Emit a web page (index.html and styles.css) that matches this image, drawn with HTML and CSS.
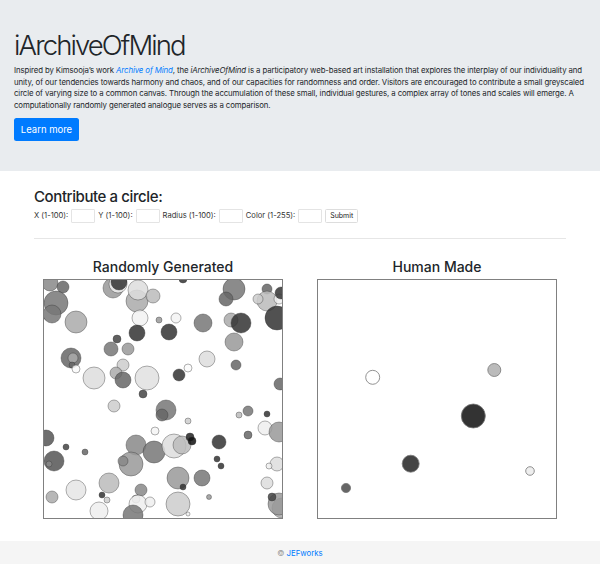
FILE: index.html
```html
<!DOCTYPE html>
<html>
<head>
<meta charset="utf-8">
<link rel="stylesheet" href="styles.css">
</head>
<body>
<div class="jumbotron">
  <h1 class="title">iArchiveOfMind</h1>
  <p class="lead">Inspired by Kimsooja’s work <a href="#" class="link ital">Archive of Mind</a>, the <span class="ital">iArchiveOfMind</span> is a participatory web-based art installation that explores the interplay of our individuality and unity, of our tendencies towards harmony and chaos, and of our capacities for randomness and order. Visitors are encouraged to contribute a small greyscaled circle of varying size to a common canvas. Through the accumulation of these small, individual gestures, a complex array of tones and scales will emerge. A computationally randomly generated analogue serves as a comparison.</p>
  <a href="#" class="btn">Learn more</a>
</div>
<div class="container">
  <h2 class="contrib">Contribute a circle:</h2>
  <form class="form-row">
    <label>X (1-100):</label><input type="text" class="num">
    <label>Y (1-100):</label><input type="text" class="num">
    <label>Radius (1-100):</label><input type="text" class="num">
    <label>Color (1-255):</label><input type="text" class="num">
    <button type="button" class="submit">Submit</button>
  </form>
  <hr class="rule">
  <div class="canvases">
    <div class="col">
      <h3 class="col-title">Randomly Generated</h3>
      <div class="canvas">
        <svg class="art random" width="238" height="238" viewBox="44 280 238 238">
          <circle cx="50" cy="283" r="8" fill="#888"/>
          <circle cx="63" cy="287" r="6" fill="#666"/>
          <circle cx="56" cy="303" r="12" fill="#777"/>
          <circle cx="52" cy="314" r="9" fill="#777"/>
          <circle cx="76" cy="322" r="11" fill="#aaa"/>
          <circle cx="113" cy="288" r="10" fill="#999"/>
          <circle cx="118" cy="284" r="9" fill="#eee"/>
          <circle cx="119" cy="282" r="8" fill="#333"/>
          <circle cx="137" cy="301" r="11" fill="#aaa"/>
          <circle cx="138" cy="290" r="10" fill="#ddd"/>
          <circle cx="153" cy="296" r="7" fill="#bbb"/>
          <circle cx="140" cy="318" r="8" fill="#f2f2f2"/>
          <circle cx="159" cy="320" r="3" fill="#999"/>
          <circle cx="137" cy="333" r="8" fill="#333"/>
          <circle cx="169" cy="332" r="8" fill="#333"/>
          <circle cx="117" cy="339" r="4" fill="#444"/>
          <circle cx="111" cy="349" r="7" fill="#777"/>
          <circle cx="128" cy="349" r="6" fill="#999"/>
          <circle cx="71" cy="358" r="10" fill="#666"/>
          <circle cx="73" cy="358" r="5" fill="#aaa"/>
          <circle cx="72" cy="365" r="3" fill="#666"/>
          <circle cx="76" cy="369" r="4" fill="#fafafa"/>
          <circle cx="94" cy="378" r="11" fill="#ddd"/>
          <circle cx="123" cy="365" r="6" fill="#ccc"/>
          <circle cx="116" cy="373" r="6" fill="#aaa"/>
          <circle cx="123" cy="380" r="8" fill="#666"/>
          <circle cx="147" cy="378" r="12" fill="#e0e0e0"/>
          <circle cx="143" cy="394" r="4" fill="#444"/>
          <circle cx="183" cy="279" r="4" fill="#333"/>
          <circle cx="234" cy="289" r="11" fill="#777"/>
          <circle cx="226" cy="299" r="7" fill="#666"/>
          <circle cx="267" cy="289" r="5" fill="#666"/>
          <circle cx="267" cy="301" r="10" fill="#bbb"/>
          <circle cx="258" cy="299" r="5" fill="#ccc"/>
          <circle cx="279" cy="299" r="5" fill="#eee"/>
          <circle cx="281" cy="293" r="6" fill="#333"/>
          <circle cx="277" cy="318" r="12" fill="#333"/>
          <circle cx="176" cy="318" r="5" fill="#f3f3f3"/>
          <circle cx="203" cy="323" r="9" fill="#777"/>
          <circle cx="231" cy="320" r="7" fill="#aaa"/>
          <circle cx="241" cy="323" r="10" fill="#333"/>
          <circle cx="234" cy="342" r="9" fill="#999"/>
          <circle cx="207" cy="359" r="8" fill="#ddd"/>
          <circle cx="236" cy="365" r="5" fill="#666"/>
          <circle cx="188" cy="368" r="4" fill="#fafafa"/>
          <circle cx="179" cy="375" r="6" fill="#333"/>
          <circle cx="280" cy="384" r="6" fill="#666"/>
          <circle cx="114" cy="406" r="6" fill="#ccc"/>
          <circle cx="166" cy="410" r="10" fill="#777"/>
          <circle cx="162" cy="415" r="6" fill="#666"/>
          <circle cx="155" cy="431" r="4" fill="#f5f5f5"/>
          <circle cx="46" cy="438" r="8" fill="#555"/>
          <circle cx="66" cy="447" r="3" fill="#444"/>
          <circle cx="85" cy="452" r="3" fill="#666"/>
          <circle cx="54" cy="461" r="10" fill="#555"/>
          <circle cx="49" cy="464" r="3" fill="#888"/>
          <circle cx="136" cy="445" r="10" fill="#888"/>
          <circle cx="154" cy="452" r="11" fill="#777"/>
          <circle cx="131" cy="464" r="12" fill="#999"/>
          <circle cx="123" cy="461" r="5" fill="#888"/>
          <circle cx="109" cy="483" r="10" fill="#bbb"/>
          <circle cx="76" cy="490" r="10" fill="#e5e5e5"/>
          <circle cx="52" cy="497" r="6" fill="#aaa"/>
          <circle cx="102" cy="495" r="3" fill="#333"/>
          <circle cx="107" cy="500" r="3" fill="#ccc"/>
          <circle cx="141" cy="490" r="6" fill="#888"/>
          <circle cx="136" cy="499" r="4" fill="#ccc"/>
          <circle cx="138" cy="504" r="9" fill="#eee"/>
          <circle cx="150" cy="502" r="5" fill="#eee"/>
          <circle cx="99" cy="511" r="9" fill="#eee"/>
          <circle cx="133" cy="515" r="10" fill="#777"/>
          <circle cx="188" cy="421" r="3" fill="#ccc"/>
          <circle cx="248" cy="411" r="5" fill="#777"/>
          <circle cx="239" cy="415" r="3" fill="#bbb"/>
          <circle cx="267" cy="414" r="3" fill="#333"/>
          <circle cx="265" cy="428" r="7" fill="#eee"/>
          <circle cx="279" cy="432" r="10" fill="#999"/>
          <circle cx="248" cy="435" r="4" fill="#666"/>
          <circle cx="174" cy="446" r="12" fill="#ddd"/>
          <circle cx="182" cy="445" r="9" fill="#bbb"/>
          <circle cx="190" cy="437" r="4" fill="#222"/>
          <circle cx="192" cy="441" r="4" fill="#111"/>
          <circle cx="219" cy="442" r="7" fill="#333"/>
          <circle cx="217" cy="459" r="3" fill="#333"/>
          <circle cx="221" cy="466" r="3" fill="#333"/>
          <circle cx="277" cy="464" r="7" fill="#ddd"/>
          <circle cx="269" cy="466" r="3" fill="#eee"/>
          <circle cx="178" cy="478" r="11" fill="#999"/>
          <circle cx="202" cy="478" r="8" fill="#777"/>
          <circle cx="183" cy="487" r="3" fill="#333"/>
          <circle cx="267" cy="483" r="6" fill="#ddd"/>
          <circle cx="209" cy="497" r="2.5" fill="#999"/>
          <circle cx="178" cy="504" r="12" fill="#ccc"/>
          <circle cx="188" cy="514" r="2" fill="#eee"/>
          <circle cx="282" cy="508" r="10" fill="#aaa"/>
          <circle cx="279" cy="504" r="11" fill="#999"/>
          <circle cx="272" cy="497" r="4" fill="#444"/>
        </svg>
      </div>
    </div>
    <div class="col">
      <h3 class="col-title">Human Made</h3>
      <div class="canvas">
        <svg class="art human" width="238" height="238" viewBox="318 280 238 238">
          <circle cx="372.7" cy="377.3" r="7" fill="#fff"/>
          <circle cx="494.3" cy="370" r="6.5" fill="#bbb"/>
          <circle cx="473.3" cy="416" r="12" fill="#333"/>
          <circle cx="410.7" cy="463.7" r="8.5" fill="#444"/>
          <circle cx="530" cy="471" r="4.3" fill="#eee"/>
          <circle cx="346" cy="488" r="4.6" fill="#666"/>
        </svg>
      </div>
    </div>
  </div>
</div>
<footer class="footer"><span class="copy">©</span> <a href="#" class="link">JEFworks</a></footer>
</body>
</html>
```
FILE: styles.css
```css
html, body {
  margin: 0;
  padding: 0;
  background: #fff;
}
body {
  font-family: Inter, "Liberation Sans", sans-serif;
  color: #212529;
  font-size: 7.8px;
  line-height: 1.5;
  width: 600px;
  height: 564px;
  display: flex;
  flex-direction: column;
}
.jumbotron {
  background: #e9ecef;
  padding: 29px 14px 30px 14px;
}
.title {
  font-size: 27.5px;
  font-weight: 300;
  line-height: 1.2;
  margin: 0 0 3px 0;
  letter-spacing: -1.9px;
}
.lead {
  margin: 0 0 6px 0;
  font-size: 7.8px;
  line-height: 11.7px;
  letter-spacing: -0.1px;
}
.ital {
  font-style: italic;
}
.link {
  color: #007bff;
  text-decoration: none;
}
.btn {
  display: inline-block;
  background: #007bff;
  color: #fff;
  text-decoration: none;
  font-size: 9.5px;
  line-height: 23px;
  height: 23px;
  padding: 0;
  border-radius: 2.5px;
  width: 65px;
  white-space: nowrap;
  text-align: center;
}
.container {
  padding: 0 34px;
}
.contrib {
  font-size: 15px;
  font-weight: 500;
  line-height: 1.2;
  letter-spacing: -0.4px;
  margin: 17px 0 3px 0;
}
.form-row {
  display: flex;
  align-items: center;
  height: 14px;
  font-size: 7.6px;
  color: #333;
}
.form-row label {
  margin-right: 3px;
  white-space: nowrap;
}
.num {
  width: 24px;
  height: 14px;
  box-sizing: border-box;
  border: 1px solid #e4e4e4;
  border-radius: 1px;
  padding: 0;
  margin: 0 3px 0 0;
  background: #fff;
}
.submit {
  height: 14px;
  width: 33px;
  box-sizing: border-box;
  font-family: Inter, "Liberation Sans", sans-serif;
  font-size: 7px;
  padding: 0;
  border: 1px solid #ddd;
  border-radius: 1.5px;
  background: #fff;
  color: #222;
}
.rule {
  border: 0;
  border-top: 1px solid #e6e6e6;
  margin: 15px 0 0 0;
}
.canvases {
  display: flex;
  gap: 34px;
  padding-left: 9px;
}
.col {
  width: 240px;
  display: flex;
  flex-direction: column;
  align-items: center;
}
.col-title {
  font-size: 14px;
  font-weight: 500;
  line-height: 1.2;
  margin: 20px 0 3px 0;
}
.canvas {
  width: 240px;
  height: 240px;
  box-sizing: border-box;
  border: 1px solid #808080;
  background: #fff;
}
.art {
  display: block;
  overflow: hidden;
}
.random circle {
  fill-opacity: 0.85;
  stroke: #333;
  stroke-opacity: 0.55;
  stroke-width: 0.7;
}
.human circle {
  stroke: #777;
  stroke-width: 0.8;
}
.footer {
  margin-top: auto;
  background: #f5f5f5;
  height: 22px;
  text-align: center;
  font-size: 7.8px;
  line-height: 22px;
  padding-top: 1px;
}
.copy {
  color: #999;
}
```
